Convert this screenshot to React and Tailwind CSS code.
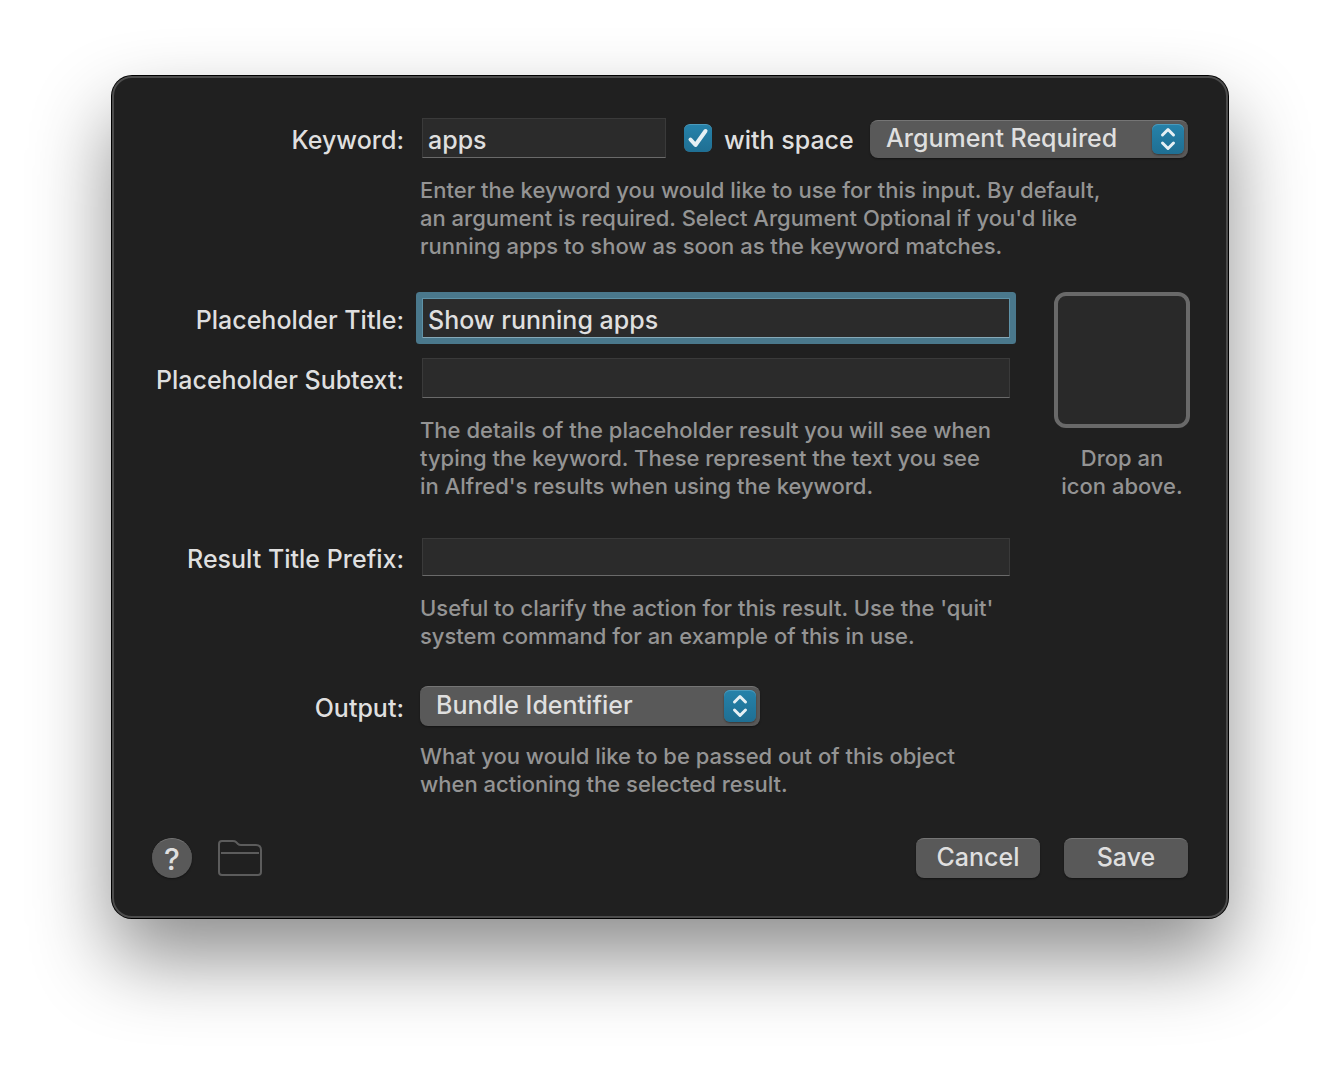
import { useState } from 'react';

function Row({ label, htmlFor, children }) {
  return (
    <div className="grid grid-cols-[252px_1fr] gap-x-4">
      <label htmlFor={htmlFor} className="pt-1 flex items-center justify-end leading-8 whitespace-nowrap">
        {label}
      </label>
      <div className="flex items-center min-w-0">{children}</div>
    </div>
  );
}

function Help({ className = 'mt-[18px]', children }) {
  return (
    <p className={`ml-[268px] text-[22px] leading-7 text-[#949494] whitespace-nowrap ${className}`}>
      {children}
    </p>
  );
}

function TextField({ className = 'h-10 flex-1', ...props }) {
  return (
    <input
      type="text"
      className={`ml-0.5 min-w-0 bg-[#2b2b2b] border border-[#3a3a3a] border-b-[#6a6a6a] px-[5px] pt-1 outline-none ${className}`}
      {...props}
    />
  );
}

function Popup({ id, options, className, ...props }) {
  return (
    <div className={`relative rounded-lg ${className}`}>
      <select
        id={id}
        className="block w-full h-full appearance-none rounded-lg bg-[#595959] border-t border-[#757575] pl-4 pr-10 pb-1 leading-8 shadow-[0_1px_2px_#00000066] outline-none"
        {...props}
      >
        {options.map((option) => (
          <option key={option}>{option}</option>
        ))}
      </select>
      <span className="absolute inset-y-1 right-1 w-8 rounded-md bg-linear-to-b from-[#2682aa] to-[#1f6f93] shadow-[inset_0_1px_0_#4b9abb,0_1px_2px_#00000066] flex items-center justify-center pointer-events-none">
        <svg width="16" height="24" viewBox="0 0 16 24" fill="none" stroke="#e6f0f4" strokeWidth="3" strokeLinecap="round" strokeLinejoin="round">
          <path d="M2.500 8 8 2.500 13.500 8M2.500 16 8 21.500 13.500 16" />
        </svg>
      </span>
    </div>
  );
}

const buttonClass =
  'w-[124px] h-10 rounded-lg bg-[#595959] border-t border-[#757575] pb-1 leading-8 shadow-[0_1px_2px_#00000066]';

export default function App() {
  const [keyword, setKeyword] = useState('apps');
  const [withSpace, setWithSpace] = useState(true);
  const [title, setTitle] = useState('Show running apps');

  return (
    <div className="bg-white min-h-screen px-28 pt-[76px] pb-[148px] overflow-hidden">
      <form
        onSubmit={(e) => e.preventDefault()}
        className="rounded-[20px] border-2 border-[#4c4c4c] bg-[#202020] pt-10 pb-[38px] pl-[38px] pr-9 text-[25px] font-medium text-[#dfdfdf] font-['Inter','Liberation_Sans',sans-serif] shadow-[0_0_0_1px_#000000,0_40px_80px_#00000073]"
      >
        {/* Keyword */}
        <div className="pr-0.5">
          <Row label="Keyword:" htmlFor="keyword">
            <TextField
              id="keyword"
              className="h-10 w-[244px] shrink-0"
              value={keyword}
              onChange={(e) => setKeyword(e.target.value)}
            />
            <label className="flex items-center gap-3 ml-[18px] shrink-0">
              <span className="relative size-7">
                <input
                  type="checkbox"
                  checked={withSpace}
                  onChange={(e) => setWithSpace(e.target.checked)}
                  className="peer block size-7 appearance-none rounded-md bg-[#595959] checked:bg-linear-to-b checked:from-[#2682aa] checked:to-[#1f6f93] border-t border-[#4b9abb]"
                />
                <svg className="absolute inset-0 hidden peer-checked:block pointer-events-none" viewBox="0 0 28 28" fill="none" stroke="#e6f0f4" strokeWidth="4" strokeLinecap="round" strokeLinejoin="round">
                  <path d="M6.500 15.500 11.500 21 21.500 7" />
                </svg>
              </span>
              <span className="pt-1 leading-8 whitespace-nowrap">with space</span>
            </label>
            <Popup
              id="argument"
              aria-label="Argument"
              className="h-[38px] w-[318px] ml-auto mt-0.5 shrink-0"
              options={['Argument Required', 'Argument Optional', 'No Argument']}
            />
          </Row>
          <Help>
            Enter the keyword you would like to use for this input. By default,
            <br />
            an argument is required. Select Argument Optional if you'd like
            <br />
            running apps to show as soon as the keyword matches.
          </Help>
        </div>

        {/* Placeholder */}
        <div className="mt-8 flex gap-11">
          <div className="flex-1 min-w-0 pt-1.5">
            <Row label="Placeholder Title:" htmlFor="title">
              <TextField
                id="title"
                className="h-10 flex-1 rounded-[1px] ring-6 ring-[#4a788c] border-[#5f93a8] border-b-[#86a9b8]"
                value={title}
                onChange={(e) => setTitle(e.target.value)}
              />
            </Row>
            <div className="mt-5">
              <Row label="Placeholder Subtext:" htmlFor="subtext">
                <TextField id="subtext" />
              </Row>
            </div>
            <Help>
              The details of the placeholder result you will see when
              <br />
              typing the keyword. These represent the text you see
              <br />
              in Alfred's results when using the keyword.
            </Help>
          </div>
          <div className="w-[136px] shrink-0">
            <div className="size-[136px] rounded-xl border-4 border-[#696969] bg-[#292929]" />
            <p className="mt-4 text-center text-[22px] leading-7 text-[#949494] whitespace-nowrap">
              Drop an
              <br />
              icon above.
            </p>
          </div>
        </div>

        {/* Result */}
        <div className="mt-[38px] pr-[180px]">
          <Row label="Result Title Prefix:" htmlFor="prefix">
            <TextField id="prefix" className="h-[38px] flex-1" />
          </Row>
          <Help>
            Useful to clarify the action for this result. Use the 'quit'
            <br />
            system command for an example of this in use.
          </Help>
        </div>

        {/* Output */}
        <div className="mt-9">
          <Row label="Output:" htmlFor="output">
            <Popup
              id="output"
              className="h-10 w-[340px]"
              options={['Bundle Identifier', 'Path', 'Name']}
            />
          </Row>
          <Help className="mt-4">
            What you would like to be passed out of this object
            <br />
            when actioning the selected result.
          </Help>
        </div>

        {/* Footer */}
        <div className="mt-10 pr-0.5 flex items-center">
          <button
            type="button"
            aria-label="Help"
            className="size-10 rounded-full bg-[#595959] border-t border-[#757575] shadow-[0_1px_2px_#00000066] flex items-center justify-center text-[30px] leading-none"
          >
            ?
          </button>
          <button type="button" aria-label="Open folder" className="ml-[26px]">
            <svg width="44" height="40" viewBox="0 0 44 40" fill="none" stroke="#5c5c5c" strokeWidth="2">
              <path d="M1 34V6q0-3 3-3h11q2 0 3 1l2 2q1 1 3 1h15q5 0 5 5v22q0 3-3 3H4q-3 0-3-3ZM3 15h38" />
            </svg>
          </button>
          <div className="ml-auto flex gap-6">
            <button type="button" className={buttonClass}>Cancel</button>
            <button type="submit" className={buttonClass}>Save</button>
          </div>
        </div>
      </form>
    </div>
  );
}
